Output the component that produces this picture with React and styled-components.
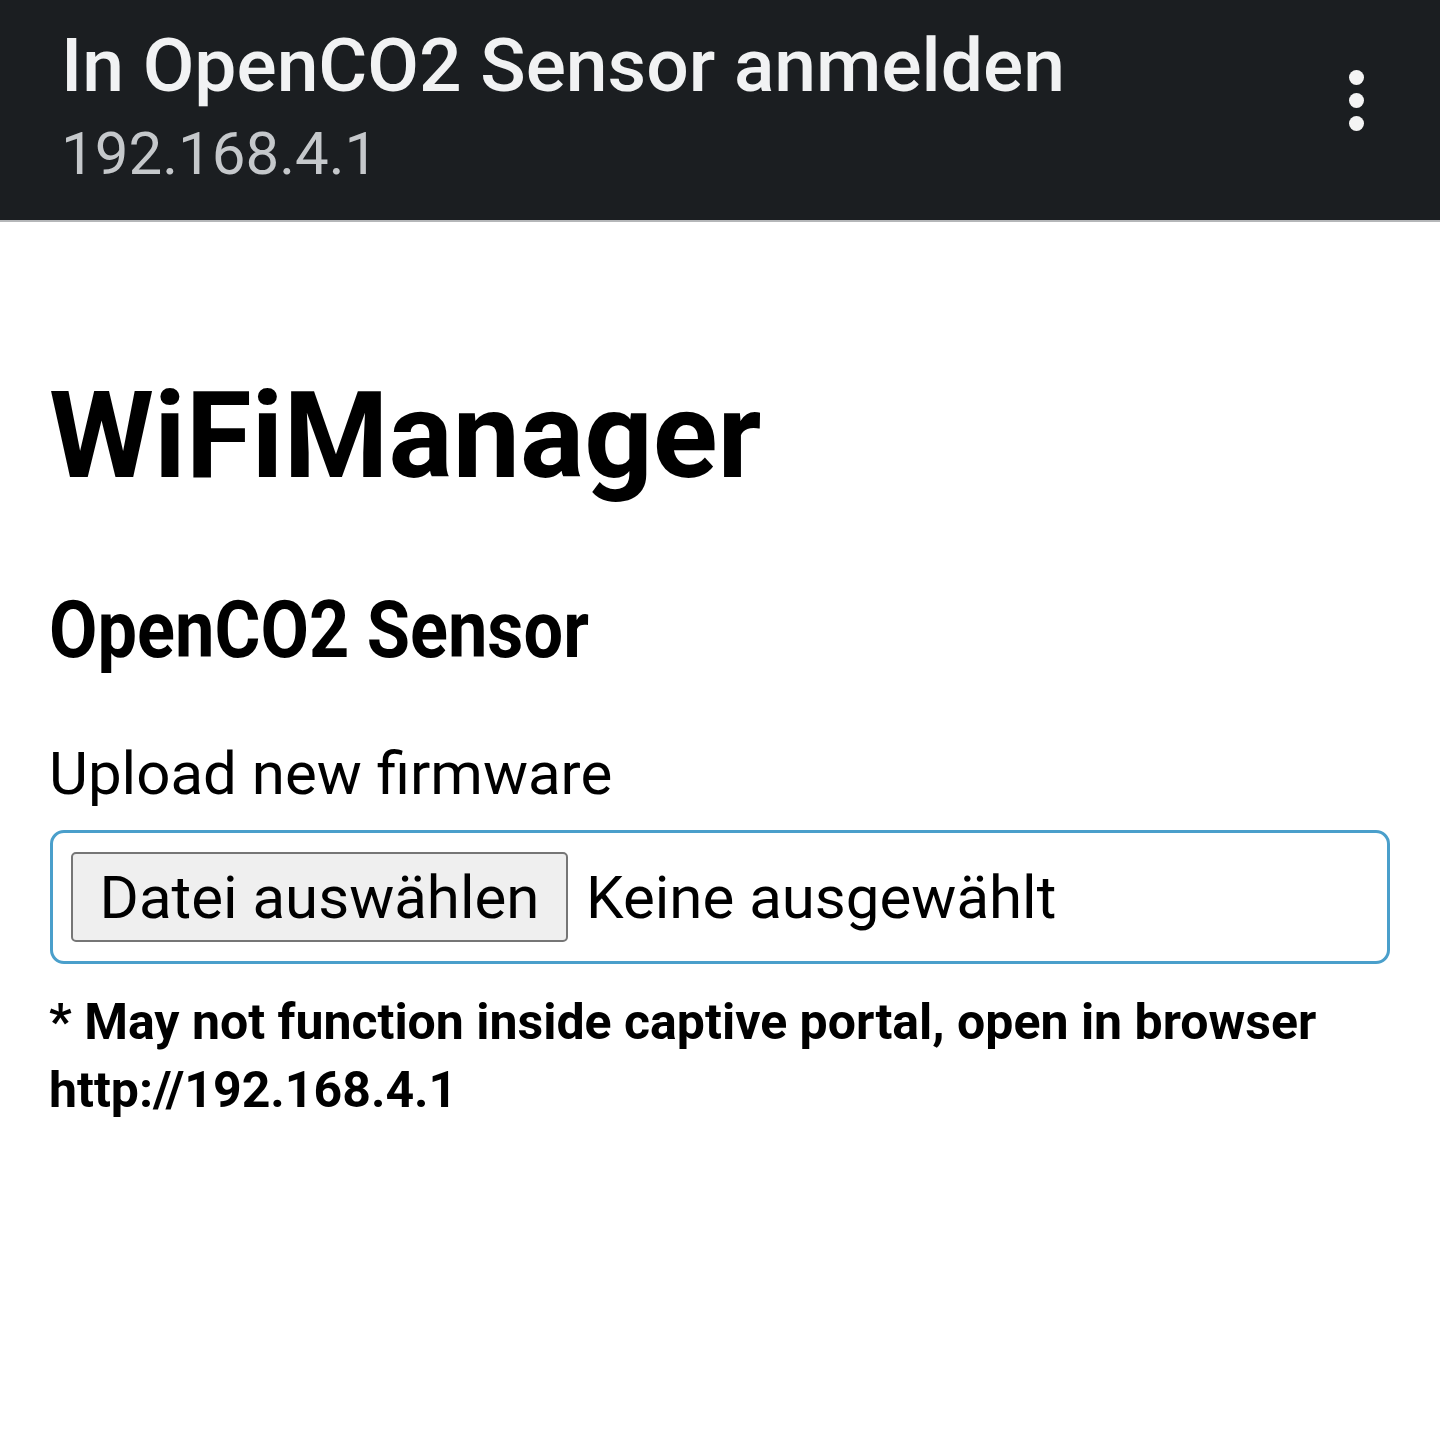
import React from "react";
import styled, { createGlobalStyle } from "styled-components";

const Global = createGlobalStyle`
  html, body { margin: 0; padding: 0; background: #ffffff; }
  body { font-family: Roboto, "Noto Sans", "Liberation Sans", sans-serif; }
  * { box-sizing: border-box; }
`;

const Page = styled.div`
  width: 1440px;
  min-height: 1446px;
  background: #ffffff;
`;

const TopBar = styled.header`
  height: 222px;
  background: #1b1e21;
  border-bottom: 2px solid #b5b7b9;
  display: flex;
  align-items: flex-start;
  justify-content: space-between;
  padding: 25px 76px 0 61px;
`;

const TitleBlock = styled.div`
  display: flex;
  flex-direction: column;
  gap: 14px;
`;

const BarTitle = styled.div`
  font-size: 75px;
  line-height: 80px;
  font-weight: 500;
  color: #f1f2f3;
`;

const BarSub = styled.div`
  font-size: 60px;
  line-height: 70px;
  font-weight: 400;
  color: #c5c8cb;
`;

const MenuDots = styled.div`
  display: flex;
  flex-direction: column;
  gap: 8px;
  margin-top: 45px;
`;

const Dot = styled.span`
  width: 15px;
  height: 15px;
  border-radius: 50%;
  background: #f4f4f4;
`;

const Main = styled.main`
  padding: 144px 50px 0 49px;
  color: #000;
`;

const H1 = styled.h1`
  margin: 0;
  font-size: 120px;
  line-height: 140px;
  font-weight: 700;
`;

const H2 = styled.h2`
  margin: 76px 0 0 0;
  font-size: 79px;
  line-height: 96px;
  font-weight: 700;
  transform: scaleX(0.89);
  transform-origin: left center;
`;

const Label = styled.div`
  margin-top: 61px;
  font-size: 60px;
  line-height: 70px;
  font-weight: 400;
`;

const FileBox = styled.div`
  margin-top: 21px;
  margin-left: 1px;
  height: 134px;
  border: 3px solid #4a9fcb;
  border-radius: 14px;
  padding: 19px 18px;
  display: flex;
  align-items: center;
  gap: 18px;
`;

const PickButton = styled.div`
  height: 90px;
  width: 497px;
  background: #efefef;
  border: 2.5px solid #767676;
  border-radius: 5px;
  display: flex;
  align-items: center;
  justify-content: center;
  font-size: 60px;
  color: #000;
`;

const FileName = styled.span`
  font-size: 60px;
  color: #000;
`;

const Note = styled.p`
  margin: 24px 0 0 0;
  font-size: 50px;
  line-height: 68px;
  font-weight: 700;
`;

export default function App() {
  return (
    <Page>
      <Global />
      <TopBar>
        <TitleBlock>
          <BarTitle>In OpenCO2 Sensor anmelden</BarTitle>
          <BarSub>192.168.4.1</BarSub>
        </TitleBlock>
        <MenuDots>
          <Dot />
          <Dot />
          <Dot />
        </MenuDots>
      </TopBar>
      <Main>
        <H1>WiFiManager</H1>
        <H2>OpenCO2 Sensor</H2>
        <Label>Upload new firmware</Label>
        <FileBox>
          <PickButton>Datei auswählen</PickButton>
          <FileName>Keine ausgewählt</FileName>
        </FileBox>
        <Note>
          * May not function inside captive portal, open in browser
          <br />
          http://192.168.4.1
        </Note>
      </Main>
    </Page>
  );
}
